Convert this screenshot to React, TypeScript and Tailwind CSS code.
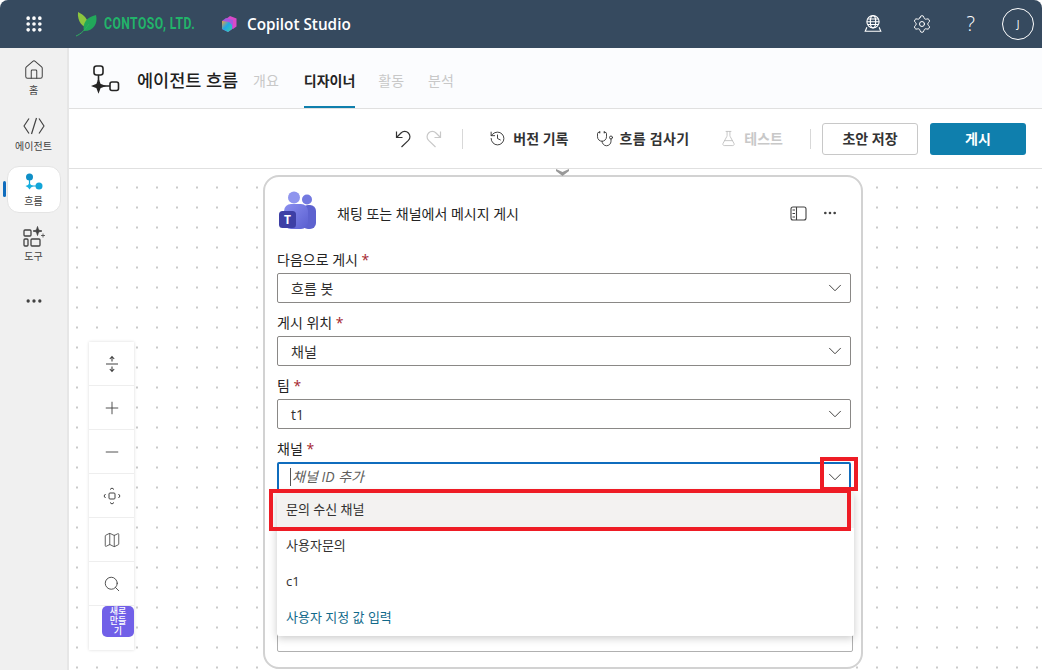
import { ChevronDown, Ellipsis, FlaskConical, Grip, History, Home, Map, Minus, Plus, Search, Settings, Stethoscope } from 'lucide-react'

const kr = 'font-["Open_Sans","Noto_Sans_CJK_KR",sans-serif]'

function Select({ label, value }: { label: string; value: string }) {
  return (
    <div className="mb-[9px]">
      <div className="h-[20px] text-[14px] leading-[22px] text-[#242424]">
        {label} <span className="text-[#a4262c]">*</span>
      </div>
      <div className="mt-[4px] h-[30px] w-[574px] rounded-[2px] border border-[#8a8886] bg-white flex items-center justify-between pl-[13px] pr-[4px] text-[14px] text-[#323130]">
        <span>{value}</span>
        <ChevronDown size={22} strokeWidth={1} className="text-[#323130]" />
      </div>
    </div>
  )
}

function FlowIcon({ big }: { big?: boolean }) {
  if (big) {
    return (
      <svg width="30" height="30" viewBox="0 0 30 30" fill="none" stroke="#242424" strokeWidth="1.6">
        <rect x="3" y="1" width="9" height="9" rx="2.5" />
        <path d="M7.5 10v6M13 21h6" />
        <path d="M7.5 15.5 L9 19.5 L13 21 L9 22.5 L7.5 26.5 L6 22.5 L2 21 L6 19.5Z" fill="#242424" />
        <rect x="19" y="17" width="8.5" height="8.5" rx="2" />
      </svg>
    )
  }
  return (
    <svg width="20" height="20" viewBox="0 0 20 20">
      <circle cx="5.5" cy="4" r="3.5" fill="#0f8fc7" />
      <path d="M5.5 7v7M6 13h6" stroke="#12a5d8" strokeWidth="1.2" />
      <path d="M5.5 10 L7 12 L9.5 13 L7 14.5 L5.5 16.5 L4 14.5 L1.5 13 L4 12Z" fill="#16b0e0" />
      <circle cx="15" cy="13" r="3.5" fill="#12a5d8" />
    </svg>
  )
}

function TeamsLogo() {
  return (
    <svg width="40" height="40" viewBox="0 0 40 40">
      <defs>
        <linearGradient id="t1" x1="0" y1="0" x2="1" y2="1">
          <stop offset="0" stopColor="#8b8ff0" />
          <stop offset="1" stopColor="#5a5fd0" />
        </linearGradient>
      </defs>
      <circle cx="16" cy="7.5" r="6" fill="#8f95ee" />
      <circle cx="29" cy="9.5" r="5" fill="#7379e0" />
      <rect x="24" y="15" width="14" height="24" rx="6" fill="#5d62cf" />
      <rect x="6" y="14" width="24" height="25" rx="7" fill="url(#t1)" />
      <rect x="1" y="21" width="17" height="17" rx="3.5" fill="#3d3fa5" />
      <text x="9.5" y="34" textAnchor="middle" fontSize="12" fontWeight="700" fill="#fff" fontFamily="Open Sans, sans-serif">T</text>
    </svg>
  )
}

function UndoIcon({ flip, color }: { flip?: boolean; color: string }) {
  return (
    <svg width="18" height="20" viewBox="0 0 18 20" fill="none" stroke={color} strokeWidth="1.2" className={flip ? '-scale-x-100' : ''}>
      <path d="M2.5 2.5v6h6M2.5 8.5 L7 4 a5.2 5.2 0 0 1 7.4 7.4 L7.5 18" />
    </svg>
  )
}

export default function App() {
  const navItem = 'w-[54px] flex flex-col items-center text-[10px] leading-[14px] text-[#424242]'
  const ctrl = 'h-[44px] flex items-center justify-center border-b border-[#eee]'
  return (
    <div className={`${kr} h-[670px] w-[1042px] overflow-hidden bg-white flex flex-col relative`}>
      <header className="h-[48px] shrink-0 bg-[#364a5f] rounded-t-[8px] flex items-center text-white">
        <div className="w-[68px] flex justify-center">
          <Grip size={20} strokeWidth={2.4} />
        </div>
        <svg width="30" height="30" viewBox="0 0 30 30" className="ml-[6px]">
          <path d="M4 3 C10 6 15 10 14 19 C9 18 3 13 4 3Z" fill="#8cc63f" />
          <path d="M22 6 C24 14 20 22 10 22 C8 14 13 8 22 6Z" fill="#22a85a" />
          <path d="M2 27 C7 25 11 21 15 15" stroke="#2fb060" strokeWidth="1" fill="none" />
        </svg>
        <span className="w-[116px] whitespace-nowrap text-[16px] font-bold text-[#22b46a] font-['Roboto',sans-serif] tracking-[0.6px] inline-block origin-left scale-x-[0.76]">CONTOSO, LTD.</span>
        <svg width="18" height="18" viewBox="0 0 18 18">
          <defs>
            <linearGradient id="cp" x1="0" y1="0" x2="1" y2="1">
              <stop offset="0" stopColor="#f2a03c" />
              <stop offset="0.45" stopColor="#1fa7e8" />
              <stop offset="1" stopColor="#3ad2a0" />
            </linearGradient>
          </defs>
          <path d="M10 1 L16.5 3.5 V11.5 L13 14 L6 4Z" fill="#d94ac8" />
          <path d="M6 3 L13 5 V13.5 L8 17 L2 14 V6Z" fill="#a658e0" />
          <path d="M2 6 L9 7 L12 10 V14 L8 17 L2 14Z" fill="url(#cp)" />
        </svg>
        <span className="ml-[9px] text-[15.3px] font-semibold">Copilot Studio</span>
        <div className="ml-auto flex items-center">
          <svg width="20" height="20" viewBox="0 0 18 18" fill="none" stroke="#fff" strokeWidth="1" className="mr-[29px]">
            <circle cx="9" cy="7" r="5.5" />
            <ellipse cx="9" cy="7" rx="2.4" ry="5.5" />
            <path d="M3.5 7h11M4.3 4.5h9.4M4.3 9.5h9.4M3.5 12 L2 15.5H16L14.5 12" />
          </svg>
          <Settings size={20} strokeWidth={1.2} className="mr-[35px]" />
          <span className="mr-[27px] text-[20px] font-light">?</span>
          <div className="mr-[8px] h-[32px] w-[32px] rounded-full border border-white flex items-center justify-center text-[10px]">J</div>
        </div>
      </header>

      <div className="flex flex-1 min-h-0">
        <aside className="w-[69px] shrink-0 bg-[#f0f0f0] border-r-[2px] border-[#e6e6e6] flex flex-col items-center pt-[2px] relative">
          <div className={`${navItem} h-[56px] justify-center`}>
            <Home size={22} strokeWidth={1.1} />
            <span className="mt-[2px]">홈</span>
          </div>
          <div className={`${navItem} h-[56px] justify-center`}>
            <svg width="24" height="22" viewBox="0 0 24 22" fill="none" stroke="#424242" strokeWidth="1.2">
              <path d="M7 3.5 L2 11 L7 18.5M17 3.5 L22 11 L17 18.5M14.5 3 L9.5 19" strokeLinejoin="round" />
            </svg>
            <span className="mt-[2px]">에이전트</span>
          </div>
          <div className={`${navItem} h-[47px] rounded-[12px] bg-white border border-[#e4e4e4] mt-[4px] pt-[6px]`}>
            <FlowIcon />
            <span className="mt-[1px]">흐름</span>
          </div>
          <div className="absolute left-[3px] top-[133px] h-[16px] w-[3px] rounded-full bg-[#0f6cbd]" />
          <div className={`${navItem} h-[50px] mt-[13px]`}>
            <svg width="22" height="22" viewBox="0 0 22 22" fill="none" stroke="#424242" strokeWidth="1.3">
              <rect x="1" y="4" width="7" height="6" rx="1" />
              <rect x="1" y="13" width="4" height="7" rx="1" />
              <rect x="8" y="13" width="9" height="7" rx="1" />
              <path d="M14.5 0.5 L15.5 4 L19 5 L15.5 6 L14.5 9.5 L13.5 6 L10 5 L13.5 4Z M20 7.5v4M18 9.5h4" fill="#424242" strokeWidth="0.8" />
            </svg>
            <span className="mt-[1px]">도구</span>
          </div>
          <Ellipsis size={20} className="mt-[15px] text-[#424242]" />
        </aside>

        <main className="flex-1 min-w-0 flex flex-col">
          <div className="h-[61px] shrink-0 bg-[#fbfcfe] border-b border-[#e0e0e0] flex items-center pl-[22px] pt-[4px]">
            <FlowIcon big />
            <span className="ml-[16px] text-[17.5px] font-medium text-[#1f1f1f] w-[101px] whitespace-nowrap">에이전트 흐름</span>
            <div className="flex h-full ml-[15px] text-[14px] text-[#c8c8c8]">
              <span className="flex items-center">개요</span>
              <span className="relative flex items-center ml-[25px] font-bold text-[#242424]">
                디자이너
                <span className="absolute bottom-0 left-0 right-0 h-[2.5px] bg-[#0f7fad]" />
              </span>
              <span className="flex items-center ml-[23px]">활동</span>
              <span className="flex items-center ml-[24px]">분석</span>
            </div>
          </div>

          <div className="h-[60px] shrink-0 bg-white border-b border-[#e0e0e0] flex items-center justify-end pr-[16px] text-[14px] font-bold text-[#333]">
            <UndoIcon color="#333" />
            <div className="ml-[13px]"><UndoIcon flip color="#c8c8c8" /></div>
            <div className="ml-[19px] h-[20px] w-px bg-[#d8d8d8]" />
            <History size={17} strokeWidth={1.3} className="ml-[26px]" />
            <span className="ml-[7px] whitespace-nowrap">버전 기록</span>
            <Stethoscope size={18} strokeWidth={1.2} className="ml-[27px]" />
            <span className="ml-[6px] whitespace-nowrap tracking-[0.3px]">흐름 검사기</span>
            <FlaskConical size={17} strokeWidth={1.2} className="ml-[31px] text-[#bdbdbd]" />
            <span className="ml-[7px] text-[#c8c8c8]">테스트</span>
            <div className="ml-[27px] h-[20px] w-px bg-[#d8d8d8]" />
            <button className="ml-[11px] h-[32px] w-[96px] rounded-[3px] border border-[#c8c8c8] bg-white text-[14px] font-bold text-[#333]">초안 저장</button>
            <button className="ml-[12px] h-[32px] w-[96px] rounded-[3px] bg-[#0f7fad] text-[14px] font-bold text-white">게시</button>
          </div>

          <div className="relative flex-1 min-h-0 pl-[194px] pt-[6px] bg-white bg-[radial-gradient(ellipse_1.4px_0.8px_at_center,#b4b4b4_60%,transparent_100%)] bg-[size:20px_20px] bg-[position:-2px_8.5px]">
            <svg width="15" height="7" viewBox="0 0 15 7" className="absolute left-[486px] top-0" fill="#999">
              <path d="M1 0 L7.5 3 L14 0 V2 L7.5 7 L1 2Z" />
            </svg>

            <section className="w-[600px] h-[494px] rounded-[16px] border-[2px] border-[#d2d2d2] bg-white pl-[12px]">
              <div className="h-[72px] flex items-center relative">
                <div className="ml-[1px] mb-[6px]"><TeamsLogo /></div>
                <span className="ml-[19px] text-[14px] text-[#242424]">채팅 또는 채널에서 메시지 게시</span>
                <svg width="17" height="15" viewBox="0 0 17 15" fill="none" stroke="#424242" strokeWidth="1.1" className="absolute left-[513px]">
                  <rect x="1" y="1" width="15" height="13" rx="2" />
                  <path d="M6.5 1v13M2.5 4h2.5M2.5 7.5h2.5M2.5 11h2.5" />
                </svg>
                <Ellipsis size={16} className="absolute left-[545px] text-[#424242]" />
              </div>
              <Select label="다음으로 게시" value="흐름 봇" />
              <Select label="게시 위치" value="채널" />
              <Select label="팀" value="t1" />
              <div className="h-[20px] text-[14px] leading-[22px] text-[#242424]">
                채널 <span className="text-[#a4262c]">*</span>
              </div>
              <div className="mt-[4px] h-[30px] w-[574px] rounded-[2px] border-[2px] border-[#0f6cbd] bg-white flex items-center justify-between pl-[11px] pr-[3px] text-[14px] italic text-[#605e5c]">
                <span className="border-l border-[#555] pl-[1px] leading-[18px]">채널 ID 추가</span>
                <ChevronDown size={22} strokeWidth={1} className="text-[#323130]" />
              </div>
              <div className="mt-[130px] h-[30px] w-[576px] rounded-[2px] border border-[#b0b0b0] bg-white" />
            </section>

            <div className="absolute left-[208px] top-[323px] w-[577px] h-[144px] bg-white shadow-[0_2px_8px_rgba(0,0,0,0.22)] rounded-[2px] text-[13px] text-[#323130]">
              <div className="h-[36px] pl-[9px] flex items-center bg-[#f3f2f1]">문의 수신 채널</div>
              <div className="h-[36px] pl-[9px] flex items-center">사용자문의</div>
              <div className="h-[36px] pl-[9px] flex items-center">c1</div>
              <div className="h-[36px] pl-[9px] flex items-center text-[#116a8a]">사용자 지정 값 입력</div>
            </div>

            <div className="absolute left-[200px] top-[320px] w-[582px] h-[42px] border-[4px] border-[#ee1c25]" />
            <div className="absolute left-[751px] top-[288px] w-[38px] h-[34px] border-[4px] border-[#ee1c25]" />

            <div className="absolute left-[20px] top-[173px] w-[45px] bg-white shadow-[0_0_3px_rgba(0,0,0,0.15)] text-[#424242]">
              <div className={ctrl}>
                <svg width="16" height="18" viewBox="0 0 16 18" fill="none" stroke="#424242" strokeWidth="1.1">
                  <path d="M2 9h12M8 1.5v5M8 11.5v5M5.8 4 L8 1.5 L10.2 4M5.8 14 L8 16.5 L10.2 14" />
                </svg>
              </div>
              <div className={ctrl}><Plus size={20} strokeWidth={1.1} /></div>
              <div className={ctrl}><Minus size={20} strokeWidth={1.1} /></div>
              <div className={ctrl}>
                <svg width="18" height="18" viewBox="0 0 18 18" fill="none" stroke="#424242" strokeWidth="1">
                  <rect x="6" y="6" width="6" height="6" rx="1" />
                  <path d="M7 2.5 L9 1 L11 2.5M7 15.5 L9 17 L11 15.5M2.5 7 L1 9 L2.5 11M15.5 7 L17 9 L15.5 11" />
                </svg>
              </div>
              <div className={ctrl}><Map size={18} strokeWidth={1.1} /></div>
              <div className={ctrl}><Search size={18} strokeWidth={1.2} /></div>
              <div className="h-[44px] relative">
                <div className="absolute right-0 top-0 w-[32px] h-[31px] rounded-[5px] bg-[#7160e8] text-white text-[9px] leading-[10px] font-medium text-center">
                  새로<br />만들<br />기
                </div>
              </div>
            </div>
          </div>
        </main>
      </div>
    </div>
  )
}
